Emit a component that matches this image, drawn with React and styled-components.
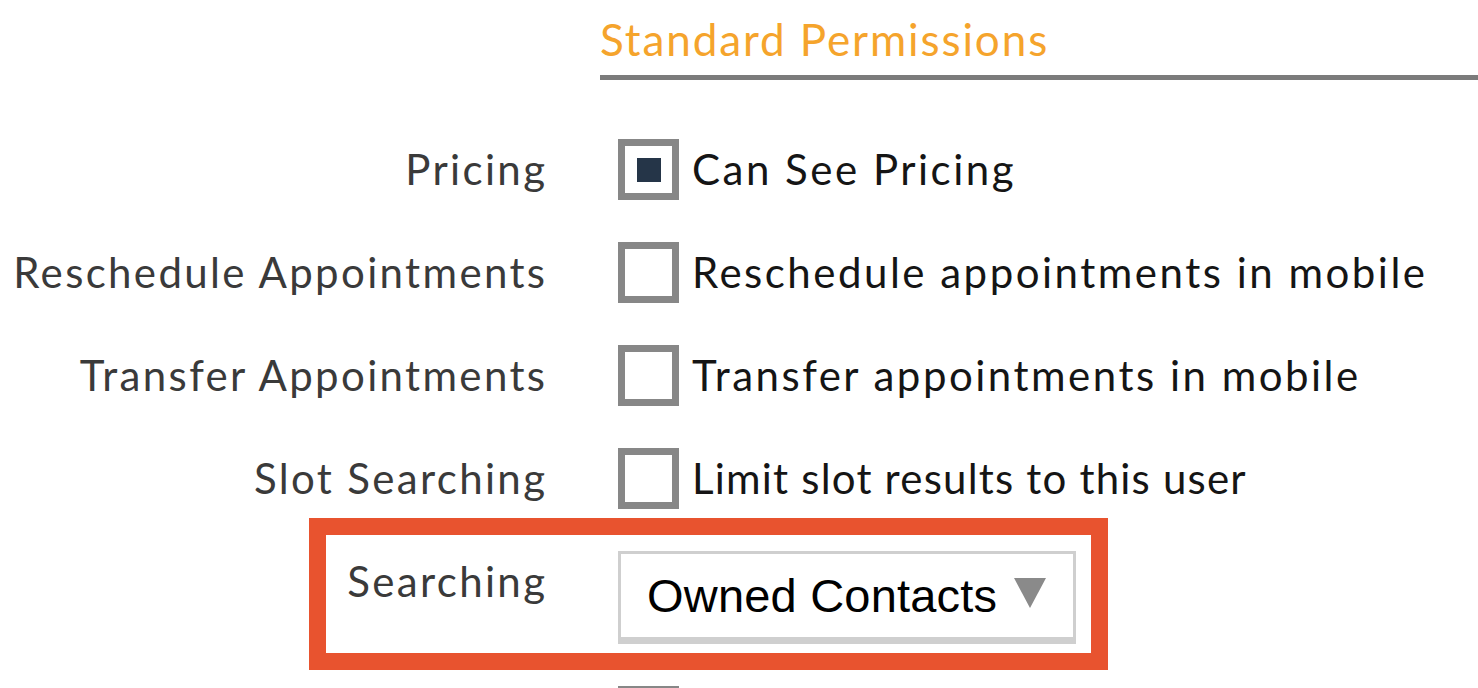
import React from "react";
import styled, { createGlobalStyle } from "styled-components";

const Global = createGlobalStyle`
  html, body { margin: 0; padding: 0; background: #ffffff; }
  body { width: 1478px; height: 688px; overflow: hidden; font-family: Lato, "Open Sans", sans-serif; }
`;

const Page = styled.div`
  width: 1478px;
  height: 688px;
  overflow: hidden;
  padding-top: 13px;
  box-sizing: border-box;
`;

const Header = styled.div`
  margin-left: 600px;
`;

const Title = styled.h2`
  margin: 0;
  font-family: Lato, sans-serif;
  font-weight: 400;
  font-size: 44px;
  line-height: 52px;
  letter-spacing: 1.9px;
  color: #f5a42c;
`;

const Rule = styled.div`
  margin-top: 10px;
  height: 5px;
  background: #7b7b7b;
`;

const Form = styled.div`
  margin-top: 59px;
  display: flex;
  flex-direction: column;
  gap: 42px;
`;

const Row = styled.div`
  position: relative;
  display: grid;
  grid-template-columns: 545px 1fr;
  column-gap: 73px;
  align-items: start;
`;

const Label = styled.div`
  text-align: right;
  font-size: 42px;
  line-height: 61px;
  letter-spacing: 2.35px;
  margin-right: -2.35px;
  color: #3a3a3a;
  white-space: nowrap;
`;

const Control = styled.label`
  display: flex;
  align-items: center;
  gap: 13px;
`;

const Box = styled.span`
  box-sizing: border-box;
  width: 61px;
  height: 61px;
  border: 7px solid #878787;
  background: #fff;
  display: flex;
  align-items: center;
  justify-content: center;
  flex: none;
`;

const Check = styled.span`
  width: 24px;
  height: 24px;
  background: #253548;
`;

const OptionText = styled.span`
  font-size: 42px;
  line-height: 61px;
  letter-spacing: ${(p) => p.$spacing}px;
  color: #151515;
  white-space: nowrap;
`;

const Select = styled.div`
  box-sizing: border-box;
  width: 458px;
  height: 93px;
  border: 3px solid #cfcfcf;
  border-bottom-width: 7px;
  display: flex;
  align-items: center;
  padding-left: 26px;
  gap: 17px;
  font-family: "Liberation Sans", Arial, sans-serif;
  font-size: 47px;
  letter-spacing: 0.2px;
  color: #000;
`;

const Arrow = styled.span`
  width: 0;
  height: 0;
  border-left: 16px solid transparent;
  border-right: 16px solid transparent;
  border-top: 30px solid #8a8a8a;
  margin-top: -6px;
`;

const Highlight = styled.div`
  position: absolute;
  left: 309px;
  top: -33px;
  width: 799px;
  height: 152px;
  box-sizing: border-box;
  border: 17px solid #e8532f;
  pointer-events: none;
`;

const rows = [
  { label: "Pricing", text: "Can See Pricing", checked: true, spacing: 2.5 },
  { label: "Reschedule Appointments", text: "Reschedule appointments in mobile", spacing: 2.5 },
  { label: "Transfer Appointments", text: "Transfer appointments in mobile", spacing: 2.5 },
  { label: "Slot Searching", text: "Limit slot results to this user", spacing: 1.2 },
];

export default function App() {
  return (
    <Page>
      <Global />
      <Header>
        <Title>Standard Permissions</Title>
        <Rule />
      </Header>
      <Form>
        {rows.map((r) => (
          <Row key={r.label}>
            <Label>{r.label}</Label>
            <Control>
              <Box>{r.checked && <Check />}</Box>
              <OptionText $spacing={r.spacing}>{r.text}</OptionText>
            </Control>
          </Row>
        ))}
        <Row>
          <Label>Searching</Label>
          <Select>
            <span>Owned Contacts</span>
            <Arrow />
          </Select>
          <Highlight />
        </Row>
        <Row>
          <Label />
          <Control>
            <Box />
          </Control>
        </Row>
      </Form>
    </Page>
  );
}
